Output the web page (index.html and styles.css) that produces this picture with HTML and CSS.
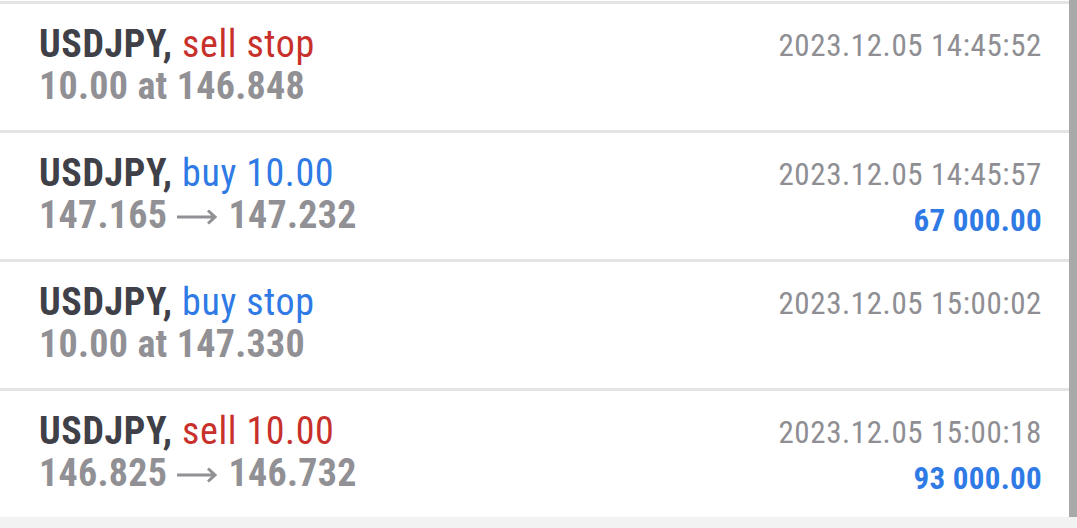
FILE: index.html
```html
<!DOCTYPE html>
<html lang="en">
<head>
    <meta charset="UTF-8">
    <meta name="viewport" content="width=device-width, initial-scale=1.0">
    <title>History</title>
    <link rel="stylesheet" href="styles.css">
</head>
<body>
    <div class="deals">
        <div class="deal">
            <div class="info">
                <div class="title">USDJPY, <span class="sell">sell stop</span></div>
                <div class="price">10.00 at 146.848</div>
            </div>
            <div class="meta">
                <div class="time">2023.12.05 14:45:52</div>
            </div>
        </div>
        <div class="deal">
            <div class="info">
                <div class="title">USDJPY, <span class="buy">buy 10.00</span></div>
                <div class="price">147.165<svg class="arrow" width="40" height="16" viewBox="0 0 40 16"><path d="M0 8H38M31 1.5L38 8L31 14.5" fill="none" stroke="#909095" stroke-width="3"/></svg>147.232</div>
            </div>
            <div class="meta">
                <div class="time">2023.12.05 14:45:57</div>
                <div class="profit">67 000.00</div>
            </div>
        </div>
        <div class="deal">
            <div class="info">
                <div class="title">USDJPY, <span class="buy">buy stop</span></div>
                <div class="price">10.00 at 147.330</div>
            </div>
            <div class="meta">
                <div class="time">2023.12.05 15:00:02</div>
            </div>
        </div>
        <div class="deal">
            <div class="info">
                <div class="title">USDJPY, <span class="sell">sell 10.00</span></div>
                <div class="price">146.825<svg class="arrow" width="40" height="16" viewBox="0 0 40 16"><path d="M0 8H38M31 1.5L38 8L31 14.5" fill="none" stroke="#909095" stroke-width="3"/></svg>146.732</div>
            </div>
            <div class="meta">
                <div class="time">2023.12.05 15:00:18</div>
                <div class="profit">93 000.00</div>
            </div>
        </div>
    </div>
    <div class="footer"></div>
    <div class="scrollbar"></div>
</body>
</html>
```

FILE: styles.css
```css
html, body { overflow: hidden; }
body { margin: 0; background: #fff; font-family: "Roboto Condensed", Roboto, "Liberation Sans", sans-serif; }
.deals { padding-top: 1px; padding-right: 8px; }
.deal { display: flex; justify-content: space-between; border-top: 3px solid #e4e4e4; padding: 19px 27px 0 39px; height: 107px; }
.title { font-size: 38px; line-height: 42px; font-weight: 700; color: #404048; letter-spacing: 0.6px; }
.title .sell, .title .buy { font-weight: 400; }
.sell { color: #c8312b; }
.buy { color: #2f7ae5; }
.price { font-size: 38px; line-height: 42px; font-weight: 700; color: #909095; letter-spacing: 0.3px; }
.arrow { vertical-align: 3px; margin: 0 11px 0 10px; }
.meta { text-align: right; }
.time { font-size: 31px; line-height: 46px; color: #8e8e93; letter-spacing: 0.6px; }
.profit { font-size: 31px; line-height: 46px; font-weight: 700; color: #2f7ae5; letter-spacing: 0.3px; }
.footer { height: 11px; background: #f2f2f2; }
.scrollbar { position: fixed; top: 0; right: 0; bottom: 11px; width: 8px; background: #a9a9a9; }
```
